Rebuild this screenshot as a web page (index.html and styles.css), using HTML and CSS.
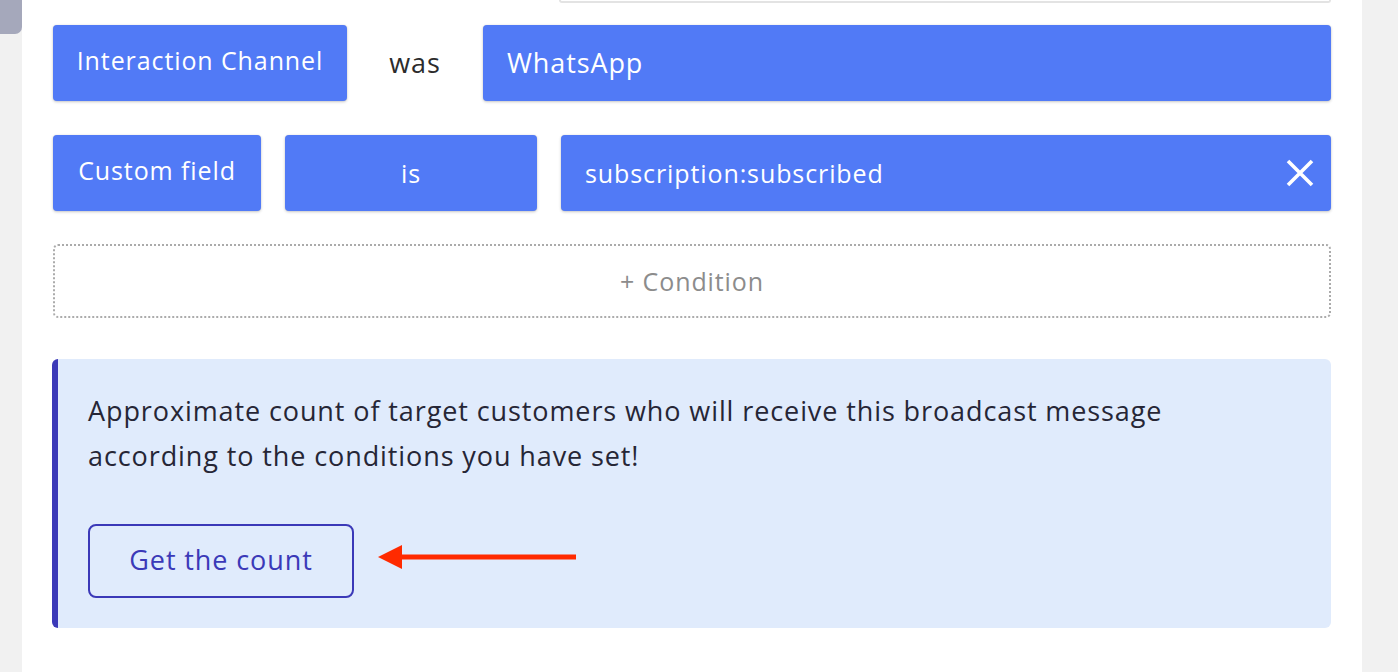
FILE: index.html
```html
<!doctype html>
<html>
	<head>
		<link rel="stylesheet" href="styles.css">
	</head>
	<body>
		<aside class="lado">
			<div class="pestana"></div>
		</aside>
		<main class="panel">
			<div class="campo-arriba"></div>
			<div class="fila">
				<div class="caja caja-canal">Interaction Channel</div>
				<div class="operador">was</div>
				<div class="caja caja-valor">WhatsApp</div>
			</div>
			<div class="fila">
				<div class="caja caja-campo">Custom field</div>
				<div class="caja caja-es">is</div>
				<div class="caja caja-sub">
					<span>subscription:subscribed</span>
					<svg class="cerrar" width="28" height="28" viewBox="0 0 28 28">
						<path d="M2 2 L26 26 M26 2 L2 26" stroke="#fff" stroke-width="3.6" fill="none"/>
					</svg>
				</div>
			</div>
			<div class="condicion">+ Condition</div>
			<section class="aviso">
				<p>Approximate count of target customers who will receive this broadcast message according to the conditions you have set!</p>
				<div class="acciones">
					<button class="contar">Get the count</button>
					<svg class="flecha" width="200" height="26" viewBox="0 0 200 26">
						<path d="M0 13 L24 1 L24 25 Z" fill="#ff2a00"/>
						<rect x="22" y="10.5" width="176" height="5" fill="#ff2a00"/>
					</svg>
				</div>
			</section>
		</main>
		<aside class="derecha"></aside>
	</body>
</html>
```

FILE: styles.css
```css
*{padding:0px;margin:0px;box-sizing:border-box;}
body,html{
	height:100%;
}
body{
	background:#f1f1f1;
	display:flex;
	flex-direction:row;
	font-family:"Open Sans","Noto Sans",sans-serif;
	font-size:25px;
	letter-spacing:0.9px;
	overflow:hidden;
}
.lado{
	width:22px;
	flex:none;
}
.pestana{
	height:34px;
	background:#a5a8bb;
	border-bottom-right-radius:7px;
}
.derecha{
	width:36px;
	flex:none;
}
.panel{
	flex:1;
	background:white;
	padding:0 31px 0 31px;
	position:relative;
}
.campo-arriba{
	margin-left:506px;
	height:3px;
	border:2px solid #e3e3e3;
	border-top:none;
	border-radius:0 0 6px 6px;
	margin-bottom:22px;
}
.fila{
	display:flex;
	align-items:center;
	gap:24px;
	height:76px;
	margin-bottom:34px;
}
.caja{
	height:76px;
	background:#517af6;
	color:white;
	border-radius:4px;
	box-shadow:0px 1px 3px rgba(0,0,0,0.22), 0px 0px 1px rgba(0,0,0,0.15);
	display:flex;
	align-items:center;
	justify-content:center;
	padding:0 24px 1px 24px;
	white-space:nowrap;
}
.caja-canal{
	width:294px;
	padding-bottom:6px;
}
.operador{
	width:88px;
	text-align:center;
	color:#2c2c2c;
	font-size:27px;
	padding-bottom:2px;
}
.caja-valor{
	flex:1;
	justify-content:flex-start;
	font-size:27px;
	padding-bottom:2px;
}
.caja-campo{
	width:208px;
	padding-bottom:6px;
}
.caja-es{
	width:252px;
}
.caja-sub{
	flex:1;
	justify-content:space-between;
	padding-right:17px;
}
.condicion{
	height:74px;
	border:2px dotted #ababab;
	border-radius:5px;
	color:#8c8c8c;
	display:flex;
	align-items:center;
	justify-content:center;
	margin-top:-1px;
	margin-bottom:41px;
}
.aviso{
	background:#e0ebfc;
	border-left:6px solid #3b39b8;
	border-radius:6px;
	margin-left:-1px;
	height:269px;
	padding:29px 30px 0 30px;
	color:#262636;
	font-size:27px;
}
.aviso p{
	line-height:45px;
	max-width:1100px;
}
.acciones{
	display:flex;
	align-items:center;
	gap:24px;
	margin-top:46px;
}
.contar{
	font-family:inherit;
	font-size:27px;
	letter-spacing:0.9px;
	color:#3b39b8;
	background:transparent;
	border:2px solid #3b39b8;
	border-radius:8px;
	width:266px;
	height:74px;
	padding-bottom:4px;
}
.flecha{
	margin-top:-8px;
}
```
